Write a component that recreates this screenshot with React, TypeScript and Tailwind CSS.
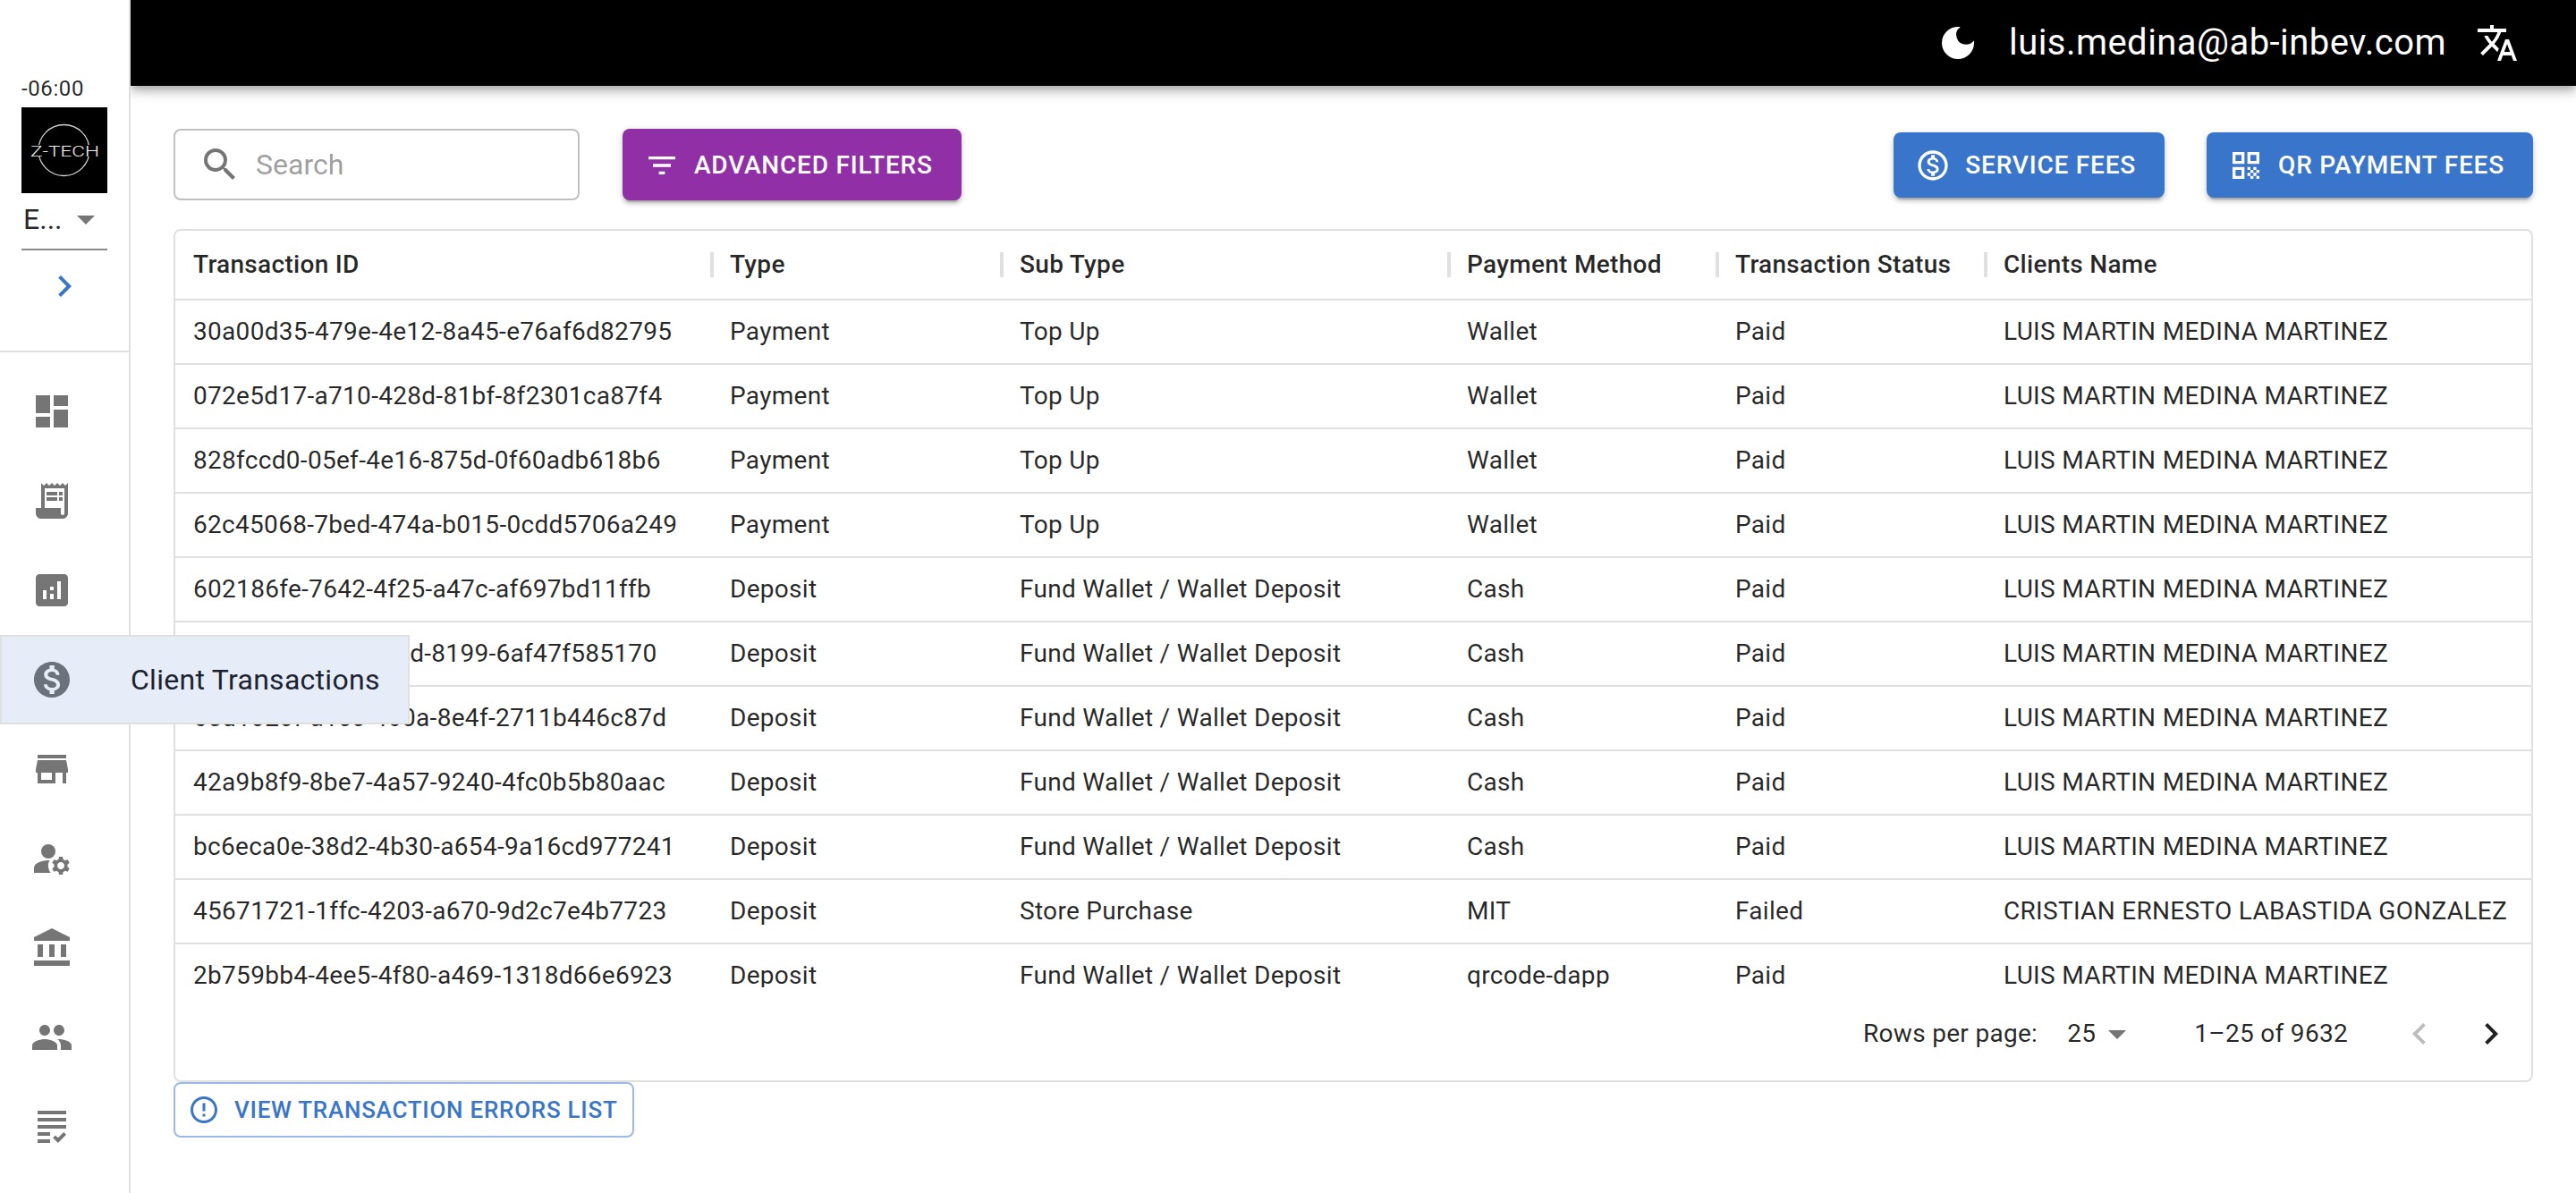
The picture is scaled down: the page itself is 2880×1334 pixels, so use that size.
import React from "react";
import {
  MdDashboard, MdReceiptLong, MdAnalytics, MdMonetizationOn, MdStore, MdManageAccounts,
  MdAccountBalance, MdPeople, MdGrading, MdChevronRight, MdArrowDropDown, MdSearch,
  MdFilterList, MdOutlineMonetizationOn, MdQrCode, MdDarkMode, MdTranslate, MdErrorOutline,
  MdKeyboardArrowLeft, MdKeyboardArrowRight,
} from "react-icons/md";

const L = "LUIS MARTIN MEDINA MARTINEZ";
const F = "Fund Wallet / Wallet Deposit";
const rows = [
  ["30a00d35-479e-4e12-8a45-e76af6d82795", "Payment", "Top Up", "Wallet", "Paid", L],
  ["072e5d17-a710-428d-81bf-8f2301ca87f4", "Payment", "Top Up", "Wallet", "Paid", L],
  ["828fccd0-05ef-4e16-875d-0f60adb618b6", "Payment", "Top Up", "Wallet", "Paid", L],
  ["62c45068-7bed-474a-b015-0cdd5706a249", "Payment", "Top Up", "Wallet", "Paid", L],
  ["602186fe-7642-4f25-a47c-af697bd11ffb", "Deposit", F, "Cash", "Paid", L],
  ["3f7c1e02-f4ab-4d1d-8199-6af47f585170", "Deposit", F, "Cash", "Paid", L],
  ["65d1020f-a1c0-460a-8e4f-2711b446c87d", "Deposit", F, "Cash", "Paid", L],
  ["42a9b8f9-8be7-4a57-9240-4fc0b5b80aac", "Deposit", F, "Cash", "Paid", L],
  ["bc6eca0e-38d2-4b30-a654-9a16cd977241", "Deposit", F, "Cash", "Paid", L],
  ["45671721-1ffc-4203-a670-9d2c7e4b7723", "Deposit", "Store Purchase", "MIT", "Failed", "CRISTIAN ERNESTO LABASTIDA GONZALEZ"],
  ["2b759bb4-4ee5-4f80-a469-1318d66e6923", "Deposit", F, "qrcode-dapp", "Paid", L],
];

const headers = ["Transaction ID", "Type", "Sub Type", "Payment Method", "Transaction Status", "Clients Name"];

function NavItem({ icon: Icon }: { icon: React.ComponentType<{ size?: number; className?: string }> }) {
  return (
    <div className="flex h-[100px] items-center pl-[34px]">
      <Icon size={48} className="text-[#757575]" />
    </div>
  );
}

function Logo() {
  return (
    <svg width="96" height="96" viewBox="0 0 96 96" className="block">
      <rect width="96" height="96" fill="#000" />
      <circle cx="47.5" cy="48" r="28.5" fill="none" stroke="#d4d4d4" strokeWidth="1.3" />
      <rect x="10" y="42" width="77" height="13" fill="#000" />
      <text
        x="10"
        y="54.5"
        fontFamily="Roboto, sans-serif"
        fontSize="17"
        fontWeight="300"
        fill="#f4f4f4"
        textLength="77"
        lengthAdjust="spacingAndGlyphs"
      >
        Z-TECH
      </text>
    </svg>
  );
}

function Sidebar() {
  return (
    <aside className="relative z-20 flex h-full w-[146px] shrink-0 flex-col border-r-2 border-[#e0e0e0] bg-white pt-[84px]">
      <div className="px-6">
        <div className="h-9 pt-px text-[24px] leading-[28px] tracking-[0.6px] text-black/85">-06:00</div>
        <Logo />
        <div className="flex h-16 items-center justify-between border-b-2 border-[#8c8c8c] pb-1">
          <span className="pl-0.5 text-[32px] leading-none text-black/85">E...</span>
          <MdArrowDropDown size={48} className="text-[#757575]" />
        </div>
      </div>
      <div className="mt-4 flex h-12 justify-center">
        <MdChevronRight size={48} className="text-[#3a75cc]" />
      </div>
      <div className="mt-12 h-0.5 bg-[#e0e0e0]" />
      <nav className="pt-4">
        <NavItem icon={MdDashboard} />
        <NavItem icon={MdReceiptLong} />
        <NavItem icon={MdAnalytics} />
        <div className="flex h-[100px] w-[458px] items-center border-2 border-[#e0e0e0] bg-[#e6ecf8] pl-8">
          <MdMonetizationOn size={48} className="shrink-0 text-[#6c727b]" />
          <span className="ml-16 text-[32px] tracking-[0.28px] text-[#1c2330]">Client Transactions</span>
        </div>
        <NavItem icon={MdStore} />
        <NavItem icon={MdManageAccounts} />
        <NavItem icon={MdAccountBalance} />
        <NavItem icon={MdPeople} />
        <NavItem icon={MdGrading} />
      </nav>
    </aside>
  );
}

function Table() {
  const grid = "grid grid-cols-[600px_324px_500px_300px_300px_1fr]";
  return (
    <div className="flex h-[954px] flex-col overflow-hidden rounded-lg border-2 border-[#e0e0e0] text-[28px] tracking-[0.3px] text-black/85">
      <div className={`${grid} h-[78px] shrink-0 border-b-2 border-[#e0e0e0] font-medium`}>
        {headers.map((h, i) => (
          <div key={h} className="flex items-center">
            {i === 0 ? (
              <span className="w-5" />
            ) : (
              <span className="-ml-0.5 mr-[18px] h-7 w-1 bg-[#e0e0e0]" />
            )}
            <span>{h}</span>
          </div>
        ))}
      </div>
      <div className="h-[768px] shrink-0 overflow-hidden">
        {rows.map((r) => (
          <div key={r[0]} className={`${grid} h-[72px] border-b-2 border-[#e0e0e0]`}>
            {r.map((c, i) => (
              <div key={i} className="flex items-center whitespace-nowrap pl-5">
                {c}
              </div>
            ))}
          </div>
        ))}
      </div>
      <div className="flex flex-1 items-center justify-end pr-[21px]">
        <span>Rows per page:</span>
        <span className="ml-[33px]">25</span>
        <MdArrowDropDown size={48} className="text-[#757575]" />
        <span className="ml-[62px]">1–25 of 9632</span>
        <MdKeyboardArrowLeft size={48} className="ml-14 text-[#bdbdbd]" />
        <MdKeyboardArrowRight size={48} className="ml-8 text-[#212121]" />
      </div>
    </div>
  );
}

function Main() {
  const btn =
    "flex items-center rounded-lg pl-6 pr-8 pt-px text-[28px] font-medium uppercase tracking-[0.8px] text-white shadow-[0_6px_2px_-4px_rgba(0,0,0,0.2),0_4px_4px_0_rgba(0,0,0,0.14),0_2px_10px_0_rgba(0,0,0,0.12)]";
  return (
    <div className="flex h-full min-w-0 flex-1 flex-col">
      <header className="relative z-10 flex h-24 shrink-0 items-center justify-end bg-black pr-16 text-white shadow-[0_4px_8px_-2px_rgba(0,0,0,0.2),0_8px_10px_0_rgba(0,0,0,0.14),0_2px_20px_0_rgba(0,0,0,0.12)]">
        <MdDarkMode size={48} />
        <span className="ml-[33px] text-[40px] leading-none tracking-[0.45px]">luis.medina@ab-inbev.com</span>
        <MdTranslate size={48} className="ml-[33px]" />
      </header>
      <main className="px-12 pt-12">
        <div className="flex h-20 items-center">
          <div className="flex h-20 w-[454px] items-center rounded-lg border-2 border-[#c0c0c0] pl-[26px]">
            <MdSearch size={48} className="text-[#757575]" />
            <span className="ml-4 text-[32px] text-black/40">Search</span>
          </div>
          <button className={`${btn} ml-12 h-20 bg-[#9130a6]`}>
            <MdFilterList size={40} className="mr-4" />
            Advanced Filters
          </button>
          <div className="ml-auto flex items-center gap-[47px]">
            <button className={`${btn} h-[73px] bg-[#3a75cc]`}>
              <MdOutlineMonetizationOn size={40} className="mr-4" />
              Service Fees
            </button>
            <button className={`${btn} h-[73px] bg-[#3a75cc]`}>
              <MdQrCode size={40} className="mr-4" />
              QR Payment Fees
            </button>
          </div>
        </div>
        <div className="mt-8">
          <Table />
        </div>
        <button className="flex h-[62px] items-center rounded-lg border-2 border-[#9cb9e6] pl-[14px] pr-4 text-[26px] font-medium uppercase tracking-[0.74px] text-[#3a75cc]">
          <MdErrorOutline size={36} className="mr-4" />
          View Transaction Errors List
        </button>
      </main>
    </div>
  );
}

export default function App() {
  return (
    <div className="flex h-[1334px] w-full overflow-hidden bg-white font-['Roboto',sans-serif]">
      <Sidebar />
      <Main />
    </div>
  );
}
